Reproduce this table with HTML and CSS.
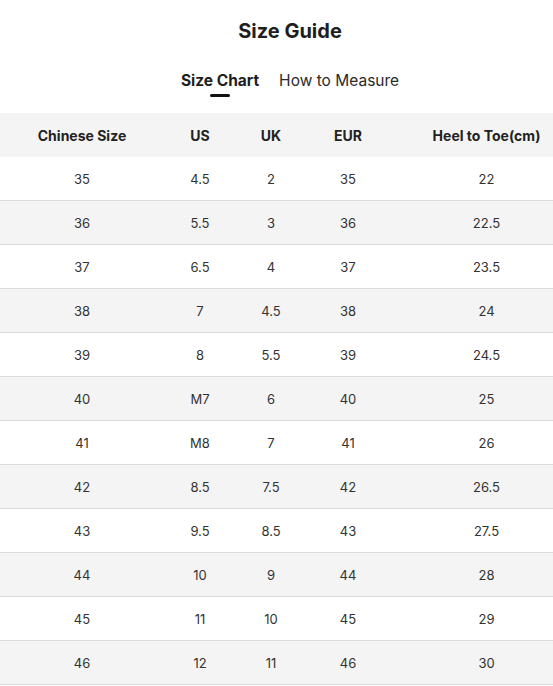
FILE: index.html
```html
<!DOCTYPE html>
<html>
<head>
<meta charset="utf-8">
<link rel="stylesheet" href="styles.css">
</head>
<body>
<div class="guide">
  <h1 class="title">Size Guide</h1>
  <div class="tabs">
    <div class="tab active">Size Chart</div>
    <div class="tab">How to Measure</div>
  </div>
  <table class="chart">
    <colgroup>
      <col class="c1"><col class="c2"><col class="c3"><col class="c4"><col class="c5">
    </colgroup>
    <thead>
      <tr><th>Chinese Size</th><th>US</th><th>UK</th><th>EUR</th><th class="last">Heel to Toe(cm)</th></tr>
    </thead>
    <tbody>
      <tr><td>35</td><td>4.5</td><td>2</td><td>35</td><td class="last">22</td></tr>
      <tr><td>36</td><td>5.5</td><td>3</td><td>36</td><td class="last">22.5</td></tr>
      <tr><td>37</td><td>6.5</td><td>4</td><td>37</td><td class="last">23.5</td></tr>
      <tr><td>38</td><td>7</td><td>4.5</td><td>38</td><td class="last">24</td></tr>
      <tr><td>39</td><td>8</td><td>5.5</td><td>39</td><td class="last">24.5</td></tr>
      <tr><td>40</td><td>M7</td><td>6</td><td>40</td><td class="last">25</td></tr>
      <tr><td>41</td><td>M8</td><td>7</td><td>41</td><td class="last">26</td></tr>
      <tr><td>42</td><td>8.5</td><td>7.5</td><td>42</td><td class="last">26.5</td></tr>
      <tr><td>43</td><td>9.5</td><td>8.5</td><td>43</td><td class="last">27.5</td></tr>
      <tr><td>44</td><td>10</td><td>9</td><td>44</td><td class="last">28</td></tr>
      <tr><td>45</td><td>11</td><td>10</td><td>45</td><td class="last">29</td></tr>
      <tr><td>46</td><td>12</td><td>11</td><td>46</td><td class="last">30</td></tr>
    </tbody>
  </table>
</div>
</body>
</html>
```
FILE: styles.css
```css
html, body {
  margin: 0;
  padding: 0;
  background: #fff;
}
body {
  font-family: Inter, "Noto Sans", "Liberation Sans", sans-serif;
  color: #222;
}
.guide {
  width: 553px;
}
.title {
  margin: 0;
  padding-top: 18px;
  padding-left: 27px;
  height: 26px;
  line-height: 26px;
  font-size: 20px;
  font-weight: 700;
  text-align: center;
  color: #1e1e1e;
}
.tabs {
  display: flex;
  justify-content: center;
  gap: 20px;
  margin-top: 25px;
  height: 44px;
  padding-left: 27px;
}
.tab {
  position: relative;
  font-size: 15.5px;
  line-height: 24px;
  height: 24px;
  color: #2a2a2a;
}
.tab.active {
  font-weight: 700;
  color: #1e1e1e;
}
.tab.active::after {
  content: "";
  position: absolute;
  left: 50%;
  top: 25px;
  width: 20px;
  margin-left: -10px;
  height: 3px;
  border-radius: 2px;
  background: #111;
}
.chart {
  width: 553px;
  border-collapse: collapse;
  table-layout: fixed;
}
.c1 { width: 164px; }
.c2 { width: 72px; }
.c3 { width: 70px; }
.c4 { width: 84px; }
.c5 { width: 163px; }
.chart th, .chart td {
  text-align: center;
  padding: 0;
}
.chart th {
  height: 44px;
  background: #f4f4f4;
  font-size: 14px;
  font-weight: 700;
  color: #222;
}
.chart td {
  height: 43px;
  font-size: 13px;
  color: #333;
  border-bottom: 1px solid #dcdcdc;
}
.chart .last {
  padding-left: 30px;
}
.chart tbody tr:nth-child(even) td {
  background: #f4f4f4;
}
```
